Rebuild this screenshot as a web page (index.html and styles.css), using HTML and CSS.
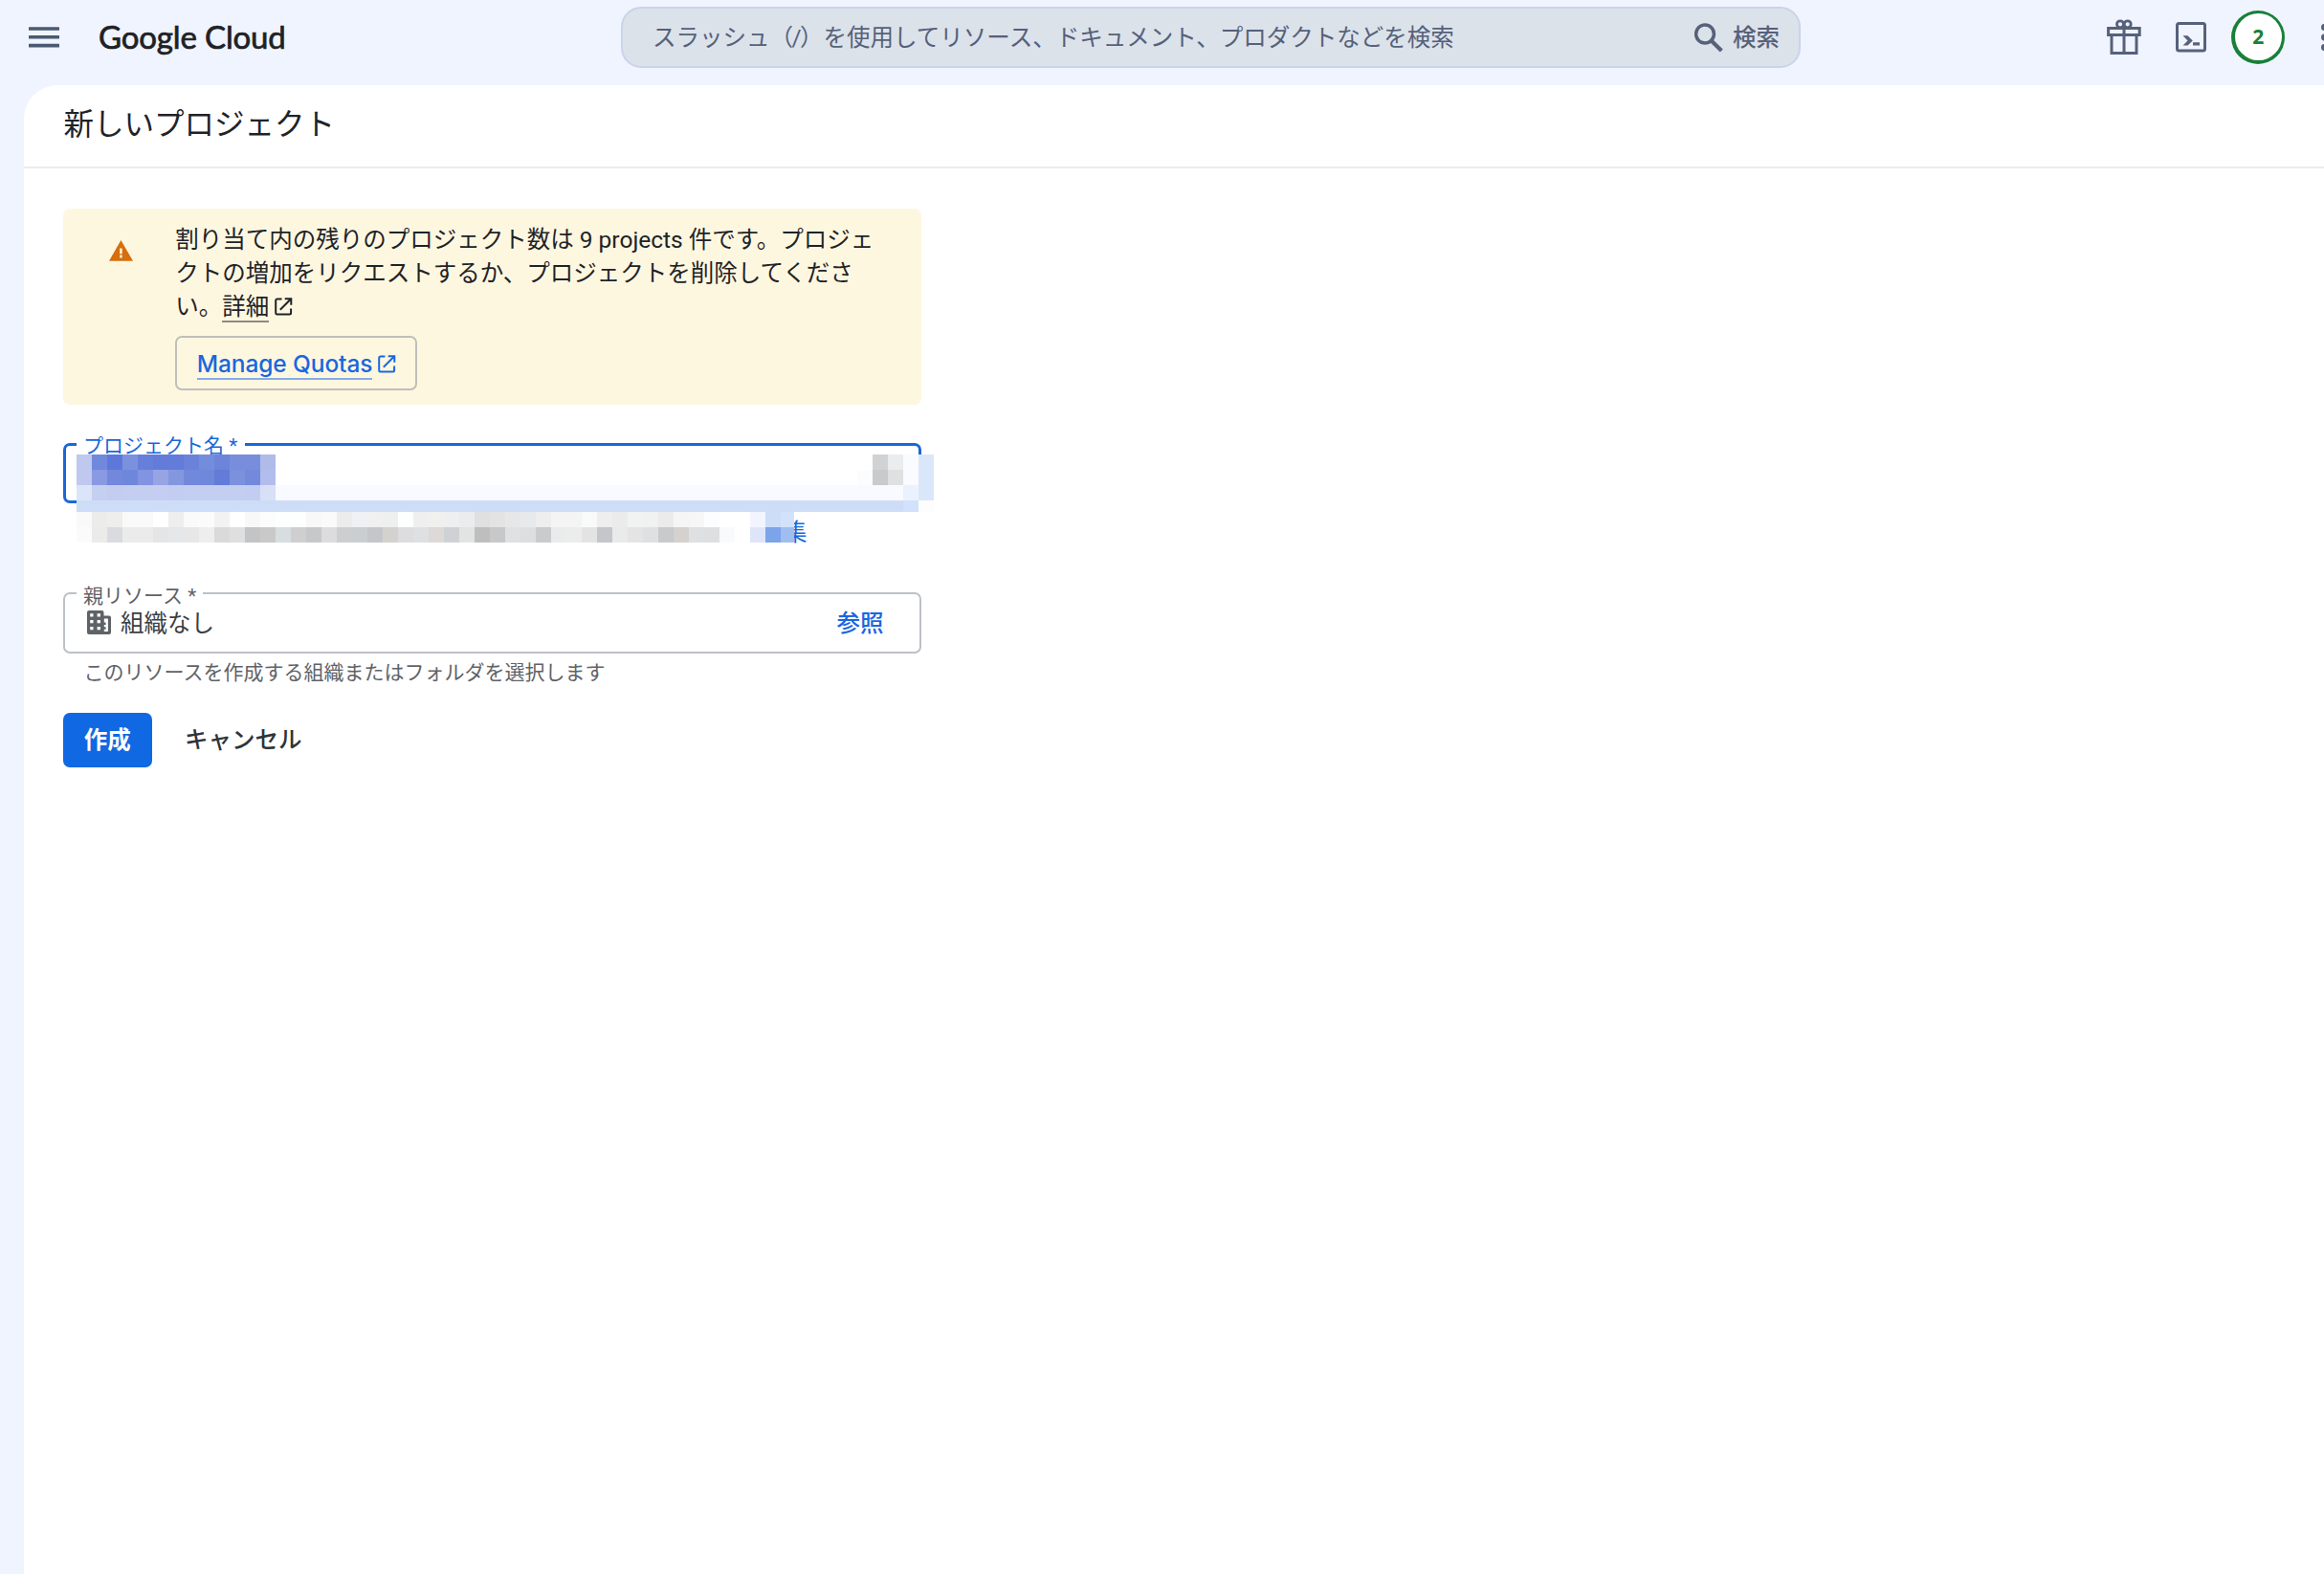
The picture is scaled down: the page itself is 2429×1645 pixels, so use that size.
FILE: index.html
```html
<!DOCTYPE html>
<html lang="ja">
<head>
<meta charset="utf-8">
<title>新しいプロジェクト – Google Cloud</title>
<link rel="stylesheet" href="styles.css">
</head>
<body>
<header class="topbar">
  <svg class="menu-icon" viewBox="0 0 32 22"><path d="M1 2h30M1 10.8h30M1 19.6h30" stroke="#4a5a70" stroke-width="3.6" stroke-linecap="round"/></svg>
  <div class="brand">Google Cloud</div>
  <div class="search">
    <span class="search-hint">スラッシュ（<span class="slash">/</span>）を使用してリソース、ドキュメント、プロダクトなどを検索</span>
    <svg class="search-icon" viewBox="0 0 30 31"><circle cx="11" cy="11.5" r="9.4" fill="none" stroke="#56617a" stroke-width="3.5"/><path d="M17.6 18.4L28.3 29" stroke="#56617a" stroke-width="4.2"/></svg>
    <span class="search-label">検索</span>
  </div>
  <div class="tools">
    <svg class="gift-icon" viewBox="0 0 36 38" fill="none" stroke="#56617a" stroke-width="3"><path d="M1.6 9.4h32.6v7H1.6zM5 17v18.6h26V17M18 9v26"/><circle cx="14" cy="5.3" r="3.5" stroke-width="2.8"/><circle cx="21.7" cy="5.3" r="3.5" stroke-width="2.8"/></svg>
    <svg class="shell-icon" viewBox="0 0 32 32"><rect x="1.5" y="1.5" width="29" height="28.5" rx="2" fill="none" stroke="#56617a" stroke-width="3"/><path d="M7.5 14.2h5l5.3 5.2-5.3 5.2h-5l5-5.2zM18 21.2h7v3.4h-7z" fill="#56617a"/></svg>
    <div class="badge"><span>2</span></div>
    <svg class="more-icon" viewBox="0 0 7 28" fill="#56617a"><circle cx="3.5" cy="3.5" r="3.5"/><circle cx="3.5" cy="14" r="3.5"/><circle cx="3.5" cy="24.5" r="3.5"/></svg>
  </div>
</header>
<main class="page">
  <h1 class="title">新しいプロジェクト</h1>
  <div class="content">
    <section class="alert">
      <svg class="warn-icon" viewBox="0 0 25 22"><path d="M12.4 0L25 21.7H0z" fill="#d56e0c"/><path d="M12.4 8.4v5.8M12.4 15.6v2.9" stroke="#fef7e0" stroke-width="2.5"/></svg>
      <div class="alert-body">
        <p class="alert-text">割り当て内の残りのプロジェクト数は 9 projects 件です。プロジェクトの増加をリクエストするか、プロジェクトを削除してください。<a class="detail">詳細</a><svg class="ext-icon" viewBox="0 0 19 19" fill="none" stroke="currentColor" stroke-width="2"><path d="M7.5 1.5H2.6Q1.2 1.5 1.2 3v13q0 1.5 1.4 1.5h13q1.5 0 1.5-1.5v-4.6M10.7 1.2h6.6v6.6M17 1.5L5.8 12.8"/></svg></p>
        <a class="quota-button"><span>Manage Quotas</span><svg class="ext-icon" viewBox="0 0 19 19" fill="none" stroke="currentColor" stroke-width="2"><path d="M7.5 1.5H2.6Q1.2 1.5 1.2 3v13q0 1.5 1.4 1.5h13q1.5 0 1.5-1.5v-4.6M10.7 1.2h6.6v6.6M17 1.5L5.8 12.8"/></svg></a>
      </div>
    </section>
    <div class="name-block">
      <fieldset class="field field-active"><legend>プロジェクト名 *</legend></fieldset>
      <div class="edit-link">集</div>
      <svg class="mosaic" viewBox="0 0 896 92" shape-rendering="crispEdges"></svg>
    </div>
    <fieldset class="field field-parent">
      <legend>親リソース *</legend>
      <div class="field-row">
        <svg class="org-icon" viewBox="0 0 25 25"><path d="M2 0h13.5q2 0 2 2v3.5H23q2 0 2 2V23q0 2-2 2H2q-2 0-2-2V2q0-2 2-2z" fill="#5f6368"/><path d="M3.2 3.2h3.3v3.3H3.2zM10.6 3.2h3.3v3.3h-3.3zM3.2 10h3.3v3.3H3.2zM10.6 10h3.3v3.3h-3.3zM3.2 17h3.3v3.3H3.2zM10.6 17h3.3v3.3h-3.3zM17.8 8.6h4.1v13.3h-4.1v-2.2h1.8v-2.5h-1.8v-2.3h1.8v-2.5h-1.8z" fill="#fff"/></svg>
        <span class="org-name">組織なし</span>
        <span class="browse">参照</span>
      </div>
    </fieldset>
    <p class="helper">このリソースを作成する組織またはフォルダを選択します</p>
    <div class="actions">
      <button class="create">作成</button>
      <button class="cancel">キャンセル</button>
    </div>
  </div>
</main>
<script src="mosaic.js"></script>
</body>
</html>
```
FILE: styles.css
```css
* { box-sizing: border-box; }
body {
  margin: 0;
  height: 1645px;
  overflow: hidden;
  background: #f0f4ff;
  color: #1f2328;
  font-family: Roboto, "Noto Sans CJK JP", sans-serif;
  font-size: 24.5px;
}
svg { display: block; flex: none; }

.topbar { display: flex; align-items: center; height: 89px; padding-bottom: 11px; }
.topbar > * { flex-shrink: 0; }
.menu-icon { width: 32px; height: 22px; margin-left: 29.5px; }
.brand {
  width: 200px;
  margin-left: 41.5px;
  padding-bottom: 2px;
  font: 400 33px/40px Lato, sans-serif;
  letter-spacing: -.15px;
  -webkit-text-stroke: .7px #202124;
  color: #202124;
  white-space: nowrap;
}
.search {
  display: flex;
  align-items: center;
  width: 1233px;
  height: 64px;
  margin-left: 346px;
  padding: 0 20px 0 31px;
  border: 2px solid #c9d4ea;
  border-radius: 21px;
  background: #dce2ea;
  color: #56617a;
  white-space: nowrap;
}
.search-hint { flex: 1; padding-bottom: 3px; }
.slash { margin: 0 -1.5px; }
.search-icon { width: 30px; height: 31px; }
.search-label { margin-left: 10px; padding-bottom: 3px; font-weight: 500; }
.tools { display: flex; align-items: center; margin-left: 319.5px; }
.tools > * { flex-shrink: 0; }
.gift-icon { width: 36px; height: 38px; }
.shell-icon { width: 32px; height: 32px; margin-left: 36px; }
.badge {
  display: flex;
  width: 56px;
  height: 56px;
  margin-left: 26px;
  padding: 2.7px 2.7px 4.3px 4.3px;
  border-radius: 50%;
  background: #188038;
}
.badge span {
  flex: 1;
  border-radius: 50%;
  background: #fff;
  color: #188038;
  font: 700 21px/49px "Noto Sans", sans-serif;
  text-align: center;
}
.more-icon { width: 7px; height: 28px; margin-left: 38px; }

.page { height: 1556px; margin-left: 24.5px; border-top-left-radius: 35px; background: #fff; }
.title {
  height: 87px;
  margin: 0;
  padding-left: 42px;
  border-bottom: 2px solid #ececec;
  font-weight: 400;
  font-size: 31.5px;
  line-height: 83px;
}
.content { width: 938px; padding: 41.5px 0 0 41.5px; }
.alert {
  display: flex;
  height: 205.5px;
  padding: 15px 40px 0 48px;
  border-radius: 7px;
  background: #fef7e0;
}
.warn-icon { width: 25px; height: 22px; margin: 18px 44.2px 0 0; }
.alert-text { margin: 0; width: 738px; height: 105px; line-height: 35px; }
.detail { border-bottom: 2px solid #8c8a80; }
.ext-icon { display: inline-block; width: 19px; height: 19px; margin-left: 5.5px; vertical-align: -1px; }
.quota-button {
  display: inline-flex;
  align-items: center;
  width: 253px;
  height: 57px;
  margin-top: 13.5px;
  padding: 3px 0 0 20.5px;
  border: 2px solid #bfbfba;
  border-radius: 7px;
  color: #1967e0;
  font: 500 24.5px/29px Inter, sans-serif;
  letter-spacing: -.1px;
}
.quota-button span { border-bottom: 2px solid #85aaea; white-space: nowrap; }
.quota-button .ext-icon { margin-top: -2px; }

.name-block { position: relative; height: 156px; padding-top: 26px; }
.field {
  min-width: 0;
  margin: 0;
  padding: 0 0 0 12px;
  border: 2px solid #bdc1c6;
  border-radius: 7px;
}
.field legend { height: 31px; padding: 0 7px; color: #5f6368; font-size: 21px; line-height: 38px; white-space: nowrap; }
.field-active { height: 77px; border: 3px solid #1967d8; padding-left: 11px; }
.field-active legend { padding-right: 8px; color: #1967d8; line-height: 35px; }
.edit-link { position: absolute; left: 753px; top: 115.5px; color: #1967d8; line-height: 35px; }
.mosaic { position: absolute; left: 14px; top: 52px; width: 896px; height: 92px; }
.field-parent { height: 79px; margin-top: 25px; }
.field-row { display: flex; align-items: center; height: 35px; margin-top: -3px; padding: 0 37px 0 10.5px; }
.org-icon { width: 25px; height: 25px; margin-top: 2px; }
.org-name { flex: 1; margin-left: 10.5px; color: #3c4043; }
.browse { color: #1967e0; font-weight: 500; }
.helper { margin: 5px 0 0 21.5px; color: #5f6368; font-size: 21px; line-height: 31px; }
.actions { display: flex; margin-top: 25.5px; }
.actions button { height: 57px; padding: 0; border: 0; border-radius: 7px; font: 500 24.5px/57px Roboto, "Noto Sans CJK JP", sans-serif; }
.actions .create { width: 92.5px; background: #1068e2; color: #fff; font-weight: 700; }
.actions .cancel { margin-left: 34.5px; background: none; color: #303438; }
```
FILE: mosaic.js
```js
// Redaction blocks: [x, y, cell height, colours]; every cell is 16px wide.
const strips = [
  [0, 0, 16, 'bfc8ee 7189dc 5e78d9 7c91de 667fda 637cda 637cda 6a82da 748cdc 6c85da 788edd 788edd afbce9'],
  [0, 16, 16, 'bfc8ee 8999e2 7288dc 6f87db 8193e1 97a4e4 8397df 7188db 7088da 637cd9 7b91de 7389dc b3bded'],
  [0, 32, 16, 'dbe4f8 c5cff2 c4cdf0 c3cef1 c3cef1 c5cef2 c3cdf1 c3cef1 c3cef1 c3cef1 c3cef1 c3cdf1 d8e0f6'],
  [832, 0, 16, 'd1d2d4 ebecee f9fbff dae7fa'],
  [816, 16, 16, 'fcfcfc c8cacc dfe0e2 f9fbff dae7fa'],
  [864, 32, 16, 'ebf2fd dae7fa'],
  [864, 48, 12, 'd2e1fc fdfdfd'],
  [0, 60, 16, 'f9f9f9 ececec eeeeec f9f9f9 f9f9f9 ffffff eeeeee fafafa fbfbfb f2f2f2 ffffff f8f8f8 fcfcfc fdfffe fdffff f8f8f8 fafafa ececec eff0f3 f0f0f0 eef0ef fcfffe efefef f0f0ee eeeff1 ebecee e0e0e0 e3e3e3 e7e7e9 e8e9eb eeeeee f4f4f4 f4f4f4 f8faf9 eeeeee ebebeb f1f2f2 f0f2f1 ebebeb f5f5f5 f6f6f6 fcfdff ffffff ffffff f2f5ff cdddf8'],
  [0, 76, 16, 'fbfbfb ebebe9 d9dbdf ebebeb ebebeb e4e5e7 e5e7e8 e7e7e7 eeeeee dadada dfdfdf c3c4c6 c9c9c9 d8dde0 cfcfcf c7c8ca dcdcdf cdced0 caced1 c5c6c9 d3d2ce dddde0 dfe0e2 dcd9d6 ced2d5 e2e4e3 bebebe c8c8c8 e0e1e3 dddee0 cbcbcb eaebed ececec e3e3e3 c5c6c9 e8ebea e4e4e4 dfe0e2 c8cacc d4d1ce dfe0e1 dddfe0 f9fafc ffffff dfe5f8 7ba4e9']
];
const mosaic = document.querySelector('.mosaic');
function block(x, y, w, h, colour) {
  const r = document.createElementNS('http://www.w3.org/2000/svg', 'rect');
  for (const [k, v] of Object.entries({ x, y, width: w, height: h, fill: '#' + colour })) r.setAttribute(k, v);
  mosaic.append(r);
}
block(0, 0, 896, 48, 'ffffff');
block(208, 32, 656, 16, 'f9faff');
block(0, 48, 864, 12, 'cdddf8');
for (const [x, y, h, colours] of strips) {
  colours.split(' ').forEach((c, i) => block(x + i * 16, y, 16, h, c));
}
block(736, 60, 14, 16, 'd3e2fb');
block(736, 76, 14, 16, 'a0bdef');
```
